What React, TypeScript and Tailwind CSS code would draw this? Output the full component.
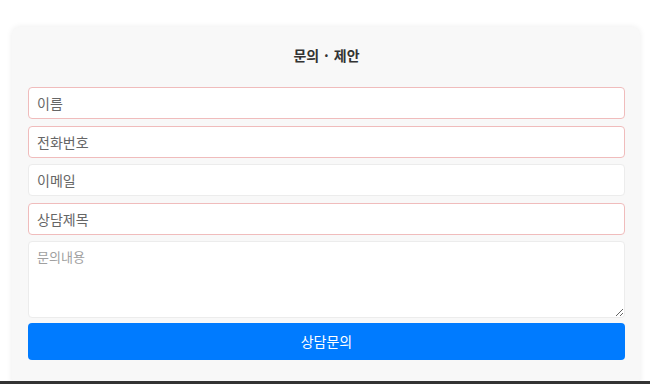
export default function App() {
  const fields = [
    { label: "이름", required: true },
    { label: "전화번호", required: true },
    { label: "이메일", required: false },
    { label: "상담제목", required: true },
  ];

  return (
    <div
      className="relative h-[384px] w-[650px] overflow-hidden bg-white"
      style={{ fontFamily: '"Noto Sans CJK KR", "Noto Sans", sans-serif' }}
    >
      <div className="ml-[12px] mt-[27px] h-[360px] w-[628px] rounded-[8px] bg-[#f8f8f8] pl-4 pr-[15px] shadow-[0_0_6px_rgba(0,0,0,0.08)]">
        <h2 className="pt-[17px] pb-[21px] text-center text-[14px] font-bold leading-[22px] text-[#333]">
          문의 · 제안
        </h2>
        <form className="flex flex-col gap-[6.5px]" onSubmit={(e) => e.preventDefault()}>
          {fields.map((f) => (
            <input
              key={f.label}
              type="text"
              placeholder={f.label}
              className={`h-[32px] w-full rounded-[4px] border bg-white px-[8px] text-[14px] text-[#333] outline-none placeholder:text-[#666] ${
                f.required ? "border-[#f0bcbc]" : "border-[#ececec]"
              }`}
            />
          ))}
          <textarea
            placeholder="문의내용"
            className="h-[77px] w-full rounded-[4px] border border-[#ececec] bg-white px-[8px] py-[5px] text-[13px] text-[#333] outline-none placeholder:text-[#a0a0a0]"
          />
          <button
            type="submit"
            className="mt-[-2px] h-[37px] w-full rounded-[4px] bg-[#007bff] text-[14px] text-white"
          >
            상담문의
          </button>
        </form>
      </div>
      <div className="absolute bottom-0 left-0 h-[3px] w-full bg-[#333]" />
    </div>
  );
}
